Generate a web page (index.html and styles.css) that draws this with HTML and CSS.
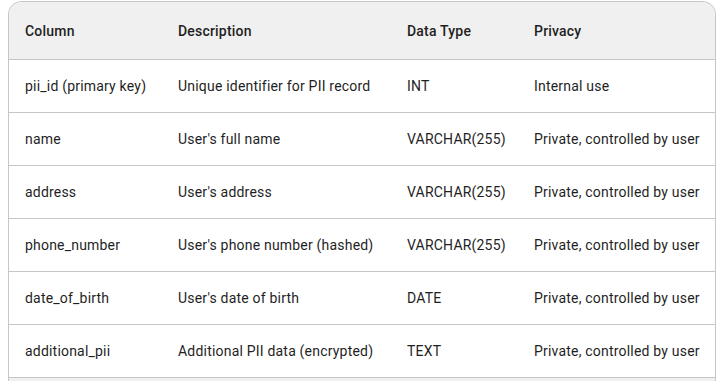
FILE: index.html
```html
<!DOCTYPE html>
<html lang="en">
<head>
    <meta charset="UTF-8">
    <title>PII Table</title>
    <link rel="stylesheet" href="styles.css">
</head>
<body>

<div class="table-wrap">
    <table class="pii-table">
        <colgroup>
            <col class="col-name">
            <col class="col-desc">
            <col class="col-type">
            <col class="col-privacy">
        </colgroup>
        <thead>
            <tr>
                <th>Column</th>
                <th>Description</th>
                <th>Data Type</th>
                <th>Privacy</th>
            </tr>
        </thead>
        <tbody>
            <tr>
                <td>pii_id (primary key)</td>
                <td>Unique identifier for PII record</td>
                <td>INT</td>
                <td>Internal use</td>
            </tr>
            <tr>
                <td>name</td>
                <td>User's full name</td>
                <td>VARCHAR(255)</td>
                <td>Private, controlled by user</td>
            </tr>
            <tr>
                <td>address</td>
                <td>User's address</td>
                <td>VARCHAR(255)</td>
                <td>Private, controlled by user</td>
            </tr>
            <tr>
                <td>phone_number</td>
                <td>User's phone number (hashed)</td>
                <td>VARCHAR(255)</td>
                <td>Private, controlled by user</td>
            </tr>
            <tr>
                <td>date_of_birth</td>
                <td>User's date of birth</td>
                <td>DATE</td>
                <td>Private, controlled by user</td>
            </tr>
            <tr>
                <td>additional_pii</td>
                <td>Additional PII data (encrypted)</td>
                <td>TEXT</td>
                <td>Private, controlled by user</td>
            </tr>
        </tbody>
    </table>
    <div class="table-footer"></div>
</div>

</body>
</html>
```

FILE: styles.css
```css
body {
    font-family: Roboto, 'Noto Sans', sans-serif;
    background-color: #fff;
    color: #1f1f1f;
    margin: 0;
    padding: 1px 6px 0 8px;
}

.table-wrap {
    border: 1px solid #c4c7c5;
    border-bottom: none;
    border-radius: 14px 14px 0 0;
    overflow: hidden;
}

.pii-table {
    width: 100%;
    border-collapse: collapse;
    table-layout: fixed;
    font-size: 14px;
    letter-spacing: 0.2px;
}

.col-name { width: 153px; }
.col-desc { width: 229px; }
.col-type { width: 127px; }

.pii-table th {
    background-color: #f0f0f0;
    font-weight: 500;
    text-align: left;
    height: 57px;
    padding: 0 16px;
    border-bottom: 1px solid #c4c7c5;
}

.pii-table td {
    height: 52px;
    padding: 0 16px;
    border-bottom: 1px solid #c4c7c5;
    white-space: nowrap;
}

.table-footer {
    height: 40px;
    background-color: #f0f0f0;
}
```
